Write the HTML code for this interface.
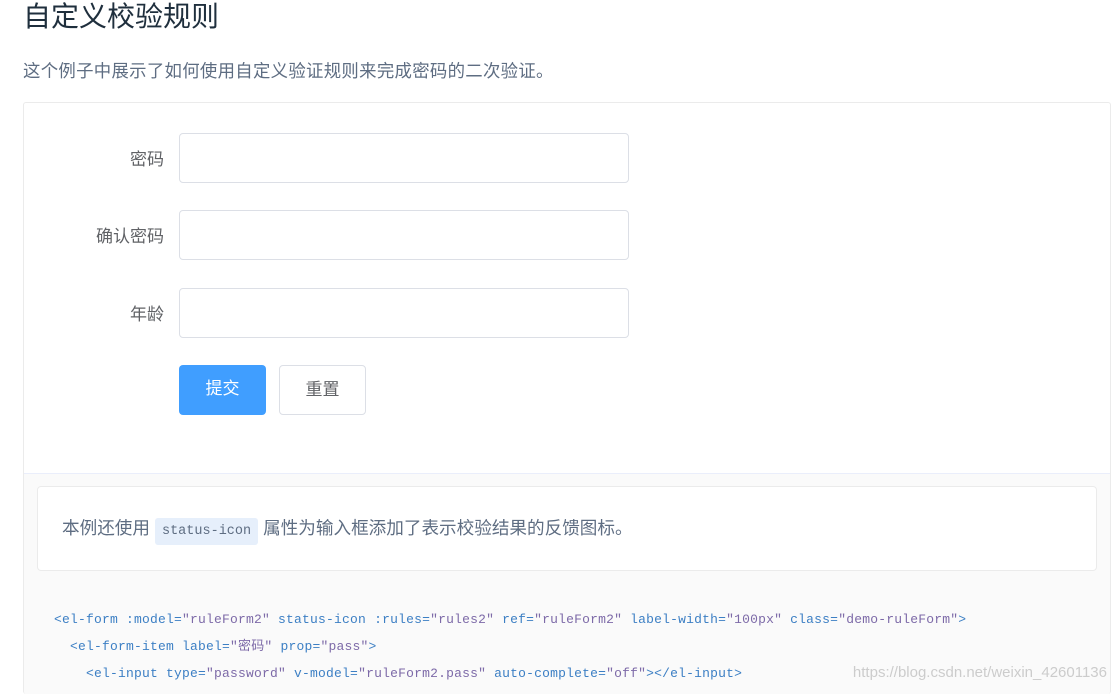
<!DOCTYPE html>
<html><head><meta charset="utf-8"><style>
html,body{margin:0;width:1115px;height:694px;overflow:hidden}
body{background:#fff;font-family:"Liberation Sans","Noto Sans CJK SC",sans-serif;position:relative}
h3{position:absolute;left:23px;top:0;margin:0;font-size:28px;font-weight:400;color:#1f2f3d;line-height:34px}
.p{position:absolute;left:23px;top:59px;font-size:17.4px;color:#5e6d82;line-height:24px;letter-spacing:0.3px}
.card{position:absolute;left:23px;top:102px;width:1088px;height:592px;border:1px solid #ebebeb;border-bottom:none;border-radius:3px;box-sizing:border-box;overflow:hidden}
.bot{position:absolute;left:0;top:370px;width:100%;height:222px;background:#fafafa;border-top:1px solid #eaeefb;box-sizing:border-box}
.lab{position:absolute;right:946px;font-size:17px;color:#606266;text-align:right}
.inp{position:absolute;left:155px;width:450px;height:50px;border:1px solid #dcdfe6;border-radius:4px;box-sizing:border-box;background:#fff}
.btn{position:absolute;top:262px;width:87px;height:50px;border-radius:4px;box-sizing:border-box;font-size:17px;line-height:48px;text-align:center}
.desc{position:absolute;left:13px;top:12px;width:1060px;height:85px;background:#fff;border:1px solid #ebebeb;border-radius:4px;box-sizing:border-box;font-size:17.6px;color:#5e6d82;padding-left:24px;line-height:83px}
code{background:#e6effb;color:#5e6d82;font-family:"Liberation Mono",monospace;font-size:13.5px;padding:6px 7px;border-radius:3px;margin:0 5px}
pre{position:absolute;left:30px;top:132px;margin:0;font-family:"Liberation Mono","Noto Sans CJK SC",monospace;font-size:13px;letter-spacing:0.2px;line-height:27px;color:#3c7fc4}
.s{color:#7d6aa8}
.wm{position:absolute;right:8px;top:664px;font-size:15px;color:#ccc}
</style></head><body>
<h3>自定义校验规则</h3>
<div class="p">这个例子中展示了如何使用自定义验证规则来完成密码的二次验证。</div>
<div class="card">
<div class="lab" style="top:42px">密码</div><div class="inp" style="top:30px"></div>
<div class="lab" style="top:119px">确认密码</div><div class="inp" style="top:107px"></div>
<div class="lab" style="top:197px">年龄</div><div class="inp" style="top:185px"></div>
<div class="btn" style="left:155px;background:#409eff;color:#fff">提交</div>
<div class="btn" style="left:255px;border:1px solid #dcdfe6;color:#606266">重置</div>
<div class="bot">
<div class="desc">本例还使用<code>status-icon</code>属性为输入框添加了表示校验结果的反馈图标。</div>
<pre>&lt;el-form :model=<span class="s">"ruleForm2"</span> status-icon :rules=<span class="s">"rules2"</span> ref=<span class="s">"ruleForm2"</span> label-width=<span class="s">"100px"</span> class=<span class="s">"demo-ruleForm"</span>&gt;
  &lt;el-form-item label=<span class="s">"密码"</span> prop=<span class="s">"pass"</span>&gt;
    &lt;el-input type=<span class="s">"password"</span> v-model=<span class="s">"ruleForm2.pass"</span> auto-complete=<span class="s">"off"</span>&gt;&lt;/el-input&gt;</pre>
</div></div>
<div class="wm">https://blog.csdn.net/weixin_42601136</div>
</body></html>
